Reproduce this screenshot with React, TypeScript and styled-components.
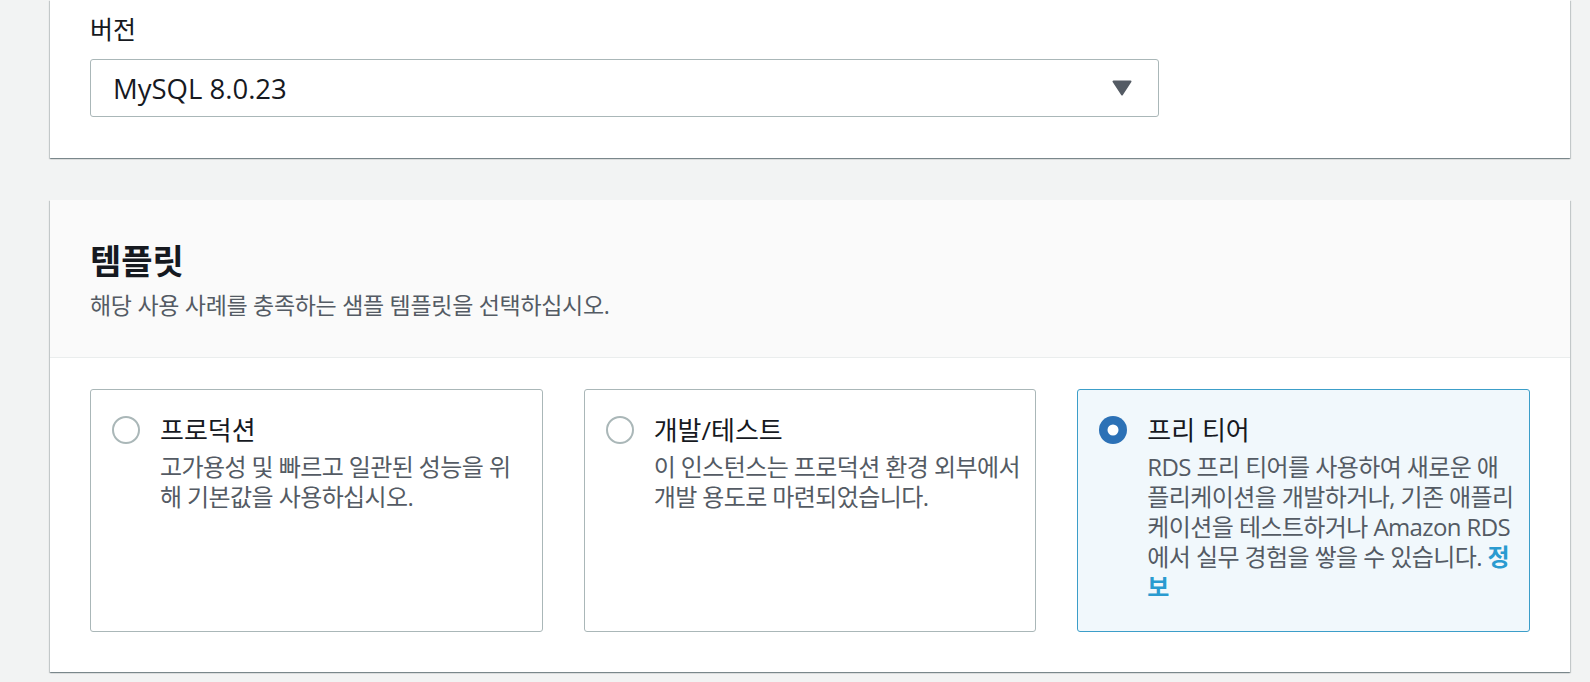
import React from 'react';
import styled, {createGlobalStyle} from 'styled-components';

const GlobalStyle = createGlobalStyle`
  body {
    margin: 0;
    background: #f2f3f3;
    font-family: 'Open Sans', 'Noto Sans CJK KR', sans-serif;
    color: #16191f;
  }
`;

const Page = styled.div`
  display: flex;
  flex-direction: column;
  gap: 42px;
  padding: 0 20px 40px 50px;
`;

const Card = styled.section`
  background: #fff;
  box-shadow: 0 1px 1px 0 rgba(0, 28, 36, 0.3), 1px 1px 1px 0 rgba(0, 28, 36, 0.15),
    -1px 1px 1px 0 rgba(0, 28, 36, 0.15);
`;

const Body = styled.div<{$top?: boolean}>`
  padding: ${props => (props.$top ? '14px 40px 41px' : '31px 40px 40px')};
`;

const Label = styled.div`
  font-size: 25px;
  line-height: 30px;
  margin-bottom: 15px;
  color: #16191f;
`;

const Select = styled.div`
  box-sizing: border-box;
  width: 1069px;
  height: 58px;
  border: 1px solid #aab7b8;
  border-radius: 3px;
  display: flex;
  align-items: center;
  justify-content: space-between;
  padding: 0 26px 0 22px;
`;

const SelectValue = styled.span`
  font-size: 27.5px;
  color: #16191f;
`;

const Caret = styled.svg`
  width: 20px;
  height: 16px;
`;

const Header = styled.div`
  background: #fafafa;
  border-bottom: 1px solid #eaeded;
  padding: 41px 40px 37px;
`;

const Heading = styled.h2`
  margin: 0 0 9px;
  font-size: 34px;
  line-height: 40px;
  font-weight: 700;
  color: #16191f;
`;

const SubText = styled.p`
  margin: 0;
  font-size: 23px;
  line-height: 30px;
  letter-spacing: -0.3px;
  color: #545b64;
`;

const TileGrid = styled.div`
  display: grid;
  grid-template-columns: repeat(3, minmax(0, 1fr));
  gap: 41px;
`;

const Tile = styled.div<{$selected?: boolean}>`
  display: flex;
  gap: 20px;
  align-items: flex-start;
  padding: 25px 20px 29px 21px;
  border: 1px solid ${props => (props.$selected ? '#3c9ec9' : '#aab7b8')};
  background: ${props => (props.$selected ? '#f1f8fc' : '#fff')};
  border-radius: 3px;
`;

const RadioIcon = styled.svg`
  flex: 0 0 28px;
  width: 28px;
  height: 28px;
  margin-top: 1px;
`;

const TileText = styled.div`
  display: flex;
  flex-direction: column;
  gap: 7px;
  min-width: 0;
`;

const TileTitle = styled.div`
  font-size: 26px;
  line-height: 30px;
  color: #16191f;
`;

const TileDesc = styled.div`
  font-size: 24px;
  line-height: 30px;
  letter-spacing: -0.6px;
  color: #545b64;
  white-space: nowrap;
`;

const InfoLink = styled.a`
  color: #2a9bd0;
  font-weight: 700;
  text-decoration: none;
  cursor: pointer;
`;

type TileData = {
  title: string;
  lines: React.ReactNode;
  selected?: boolean;
};

function getTiles(): TileData[] {
  return [
    {
      title: '프로덕션',
      lines: (
        <>
          고가용성 및 빠르고 일관된 성능을 위<br />해 기본값을 사용하십시오.
        </>
      ),
    },
    {
      title: '개발/테스트',
      lines: (
        <>
          이 인스턴스는 프로덕션 환경 외부에서<br />개발 용도로 마련되었습니다.
        </>
      ),
    },
    {
      title: '프리 티어',
      selected: true,
      lines: (
        <>
          RDS 프리 티어를 사용하여 새로운 애<br />
          플리케이션을 개발하거나, 기존 애플리<br />
          케이션을 테스트하거나 Amazon RDS<br />
          에서 실무 경험을 쌓을 수 있습니다. <InfoLink>정<br />보</InfoLink>
        </>
      ),
    },
  ];
}

function Radio({checked}: {checked?: boolean}) {
  return (
    <RadioIcon viewBox="0 0 28 28">
      {checked ? (
        <>
          <circle cx="14" cy="14" r="14" fill="#2c71b6" />
          <circle cx="14" cy="14" r="5.5" fill="#fff" />
        </>
      ) : (
        <circle cx="14" cy="14" r="13" fill="#fff" stroke="#aab7b8" strokeWidth="2" />
      )}
    </RadioIcon>
  );
}

export default function App() {
  const tiles = getTiles();
  return (
    <>
      <GlobalStyle />
      <Page>
        <Card>
          <Body $top>
            <Label>버전</Label>
            <Select>
              <SelectValue>MySQL 8.0.23</SelectValue>
              <Caret viewBox="0 0 20 16">
                <path d="M1.5 1.5 L18.5 1.5 L10 14.5 Z" fill="#545b64" stroke="#545b64" strokeWidth="2" strokeLinejoin="round" />
              </Caret>
            </Select>
          </Body>
        </Card>

        <Card>
          <Header>
            <Heading>템플릿</Heading>
            <SubText>해당 사용 사례를 충족하는 샘플 템플릿을 선택하십시오.</SubText>
          </Header>
          <Body>
            <TileGrid>
              {tiles.map(t => (
                <Tile key={t.title} $selected={t.selected}>
                  <Radio checked={t.selected} />
                  <TileText>
                    <TileTitle>{t.title}</TileTitle>
                    <TileDesc>{t.lines}</TileDesc>
                  </TileText>
                </Tile>
              ))}
            </TileGrid>
          </Body>
        </Card>
      </Page>
    </>
  );
}
